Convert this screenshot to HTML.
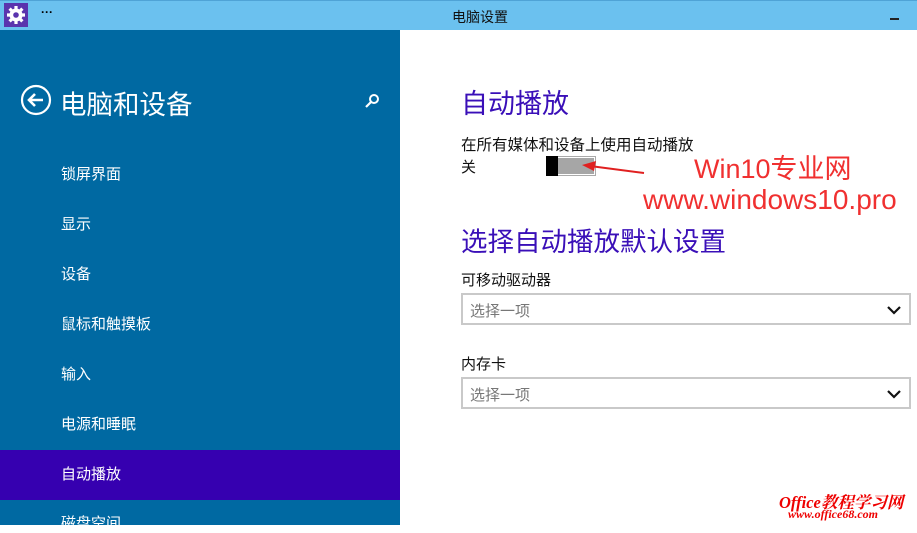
<!DOCTYPE html>
<html><head><meta charset="utf-8"><style>
*{margin:0;padding:0;box-sizing:border-box}
body{width:917px;height:525px;overflow:hidden;position:relative;background:#fff;font-family:"Liberation Sans","Noto Sans CJK SC",sans-serif}
.t{position:absolute;white-space:nowrap}
#title{position:absolute;left:0;top:0;width:917px;height:30px;background:#6bc1ef;border-top:1px solid #4fa3d6}
#left{position:absolute;left:0;top:30px;width:400px;height:495px;background:#0069a2}
.item{position:absolute;left:61px;color:#fff;font-size:15px}
.sel{position:absolute;left:0;top:450px;width:400px;height:50px;background:#3600b0}
.dd{position:absolute;left:461px;width:450px;height:32px;border:2px solid #c9c9c9;background:#fff}
.dd span{position:absolute;left:7px;top:5px;font-size:15px;color:#777}
</style></head><body>
<div id="title">
 <div style="position:absolute;left:4px;top:2px;width:24px;height:24px;background:#5a34ad">
  <svg width="24" height="24" viewBox="0 0 24 24"><g fill="#fff"><circle cx="12" cy="12" r="6.5"/><g stroke="#fff" stroke-width="3.2"><line x1="12" y1="3" x2="12" y2="21"/><line x1="3" y1="12" x2="21" y2="12"/><line x1="5.6" y1="5.6" x2="18.4" y2="18.4"/><line x1="18.4" y1="5.6" x2="5.6" y2="18.4"/></g></g><circle cx="12" cy="12" r="2.8" fill="#5a34ad"/></svg>
 </div>
 <div class="t" style="left:41px;top:4px;font-size:12px;font-weight:bold">···</div>
 <div class="t" style="left:452px;top:6px;font-size:14px;color:#111">电脑设置</div>
 <div style="position:absolute;left:890px;top:17px;width:9px;height:2px;background:#222"></div>
</div>
<div id="left">
 <svg style="position:absolute;left:20px;top:54px" width="32" height="32" viewBox="0 0 32 32"><circle cx="16" cy="16" r="14" fill="none" stroke="#fff" stroke-width="2.2"/><path d="M23 16H10M15 10l-6 6 6 6" fill="none" stroke="#fff" stroke-width="2.6"/></svg>
 <div class="t" style="left:60px;top:53px;font-size:26.5px;color:#fff">电脑和设备</div>
 <svg style="position:absolute;left:364px;top:63px" width="16" height="16" viewBox="0 0 16 16"><circle cx="10" cy="6" r="4" fill="none" stroke="#fff" stroke-width="2"/><line x1="7" y1="9" x2="2" y2="14" stroke="#fff" stroke-width="2.2"/></svg>
 <div class="sel" style="top:420px"></div>
 <div class="item" style="top:133px">锁屏界面</div>
 <div class="item" style="top:183px">显示</div>
 <div class="item" style="top:233px">设备</div>
 <div class="item" style="top:283px">鼠标和触摸板</div>
 <div class="item" style="top:333px">输入</div>
 <div class="item" style="top:383px">电源和睡眠</div>
 <div class="item" style="top:433px">自动播放</div>
 <div class="item" style="top:482px">磁盘空间</div>
</div>
<div class="t" style="left:461px;top:82px;font-size:27px;color:#3a0fb8">自动播放</div>
<div class="t" style="left:461px;top:133px;font-size:15.5px;color:#111">在所有媒体和设备上使用自动播放</div>
<div class="t" style="left:461px;top:156px;font-size:15px;color:#111">关</div>
<div style="position:absolute;left:546px;top:156px;width:50px;height:20px;border:1px solid #aaa;background:#fff"></div>
<div style="position:absolute;left:548px;top:158px;width:46px;height:16px;background:#a6a6a6"></div>
<div style="position:absolute;left:546px;top:156px;width:12px;height:20px;background:#000"></div>
<svg style="position:absolute;left:580px;top:160px" width="70" height="20"><line x1="64" y1="13" x2="10" y2="6" stroke="#e02020" stroke-width="2"/><path d="M2 5l14-4-2 10z" fill="#e02020"/></svg>
<div class="t" style="left:694px;top:147px;font-size:27px;color:#f03030">Win10专业网</div>
<div class="t" style="left:643px;top:184px;font-size:28px;color:#f03030">www.windows10.pro</div>
<div class="t" style="left:461px;top:220px;font-size:26.5px;color:#3a0fb8">选择自动播放默认设置</div>
<div class="t" style="left:461px;top:269px;font-size:15px;color:#111">可移动驱动器</div>
<div class="dd" style="top:293px"><span>选择一项</span></div>
<div class="t" style="left:461px;top:353px;font-size:15px;color:#111">内存卡</div>
<div class="dd" style="top:377px"><span>选择一项</span></div>
<svg style="position:absolute;left:887px;top:305px" width="14" height="10"><path d="M1 2l6 6 6-6" fill="none" stroke="#111" stroke-width="2.2"/></svg>
<svg style="position:absolute;left:887px;top:389px" width="14" height="10"><path d="M1 2l6 6 6-6" fill="none" stroke="#111" stroke-width="2.2"/></svg>
<div class="t" style="left:779px;top:489px;font-size:16.5px;color:#e00;font-style:italic;font-family:'Liberation Serif','Noto Serif CJK SC',serif;font-weight:bold">Office教程学习网</div>
<div class="t" style="left:788px;top:507px;font-size:12px;color:#e00;font-style:italic;font-family:'Liberation Serif',serif;font-weight:bold">www.office68.com</div>
</body></html>
